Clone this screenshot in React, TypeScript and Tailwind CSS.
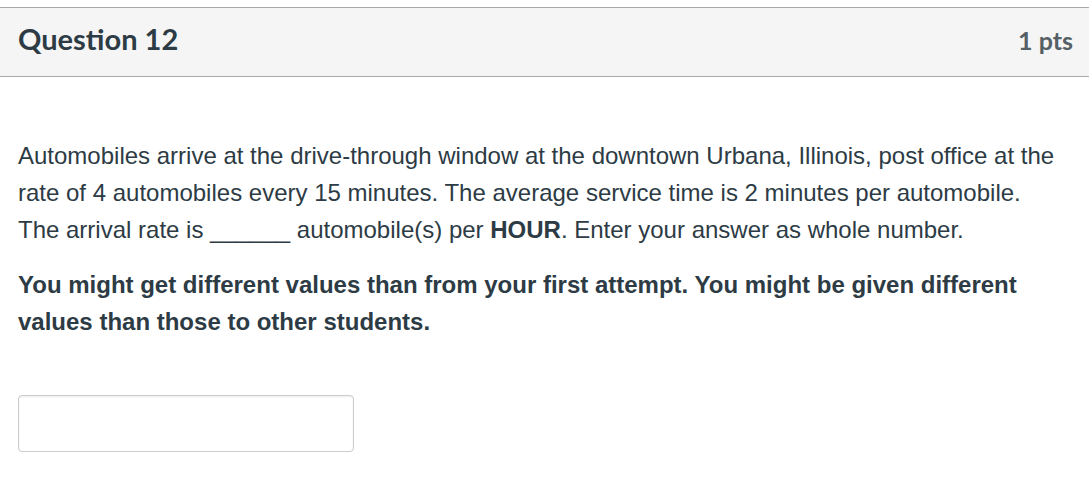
export default function App() {
  return (
    <div className="min-h-screen bg-white pt-[7px] text-[#2d3b45]">
      <div className="flex items-center justify-between border-y border-[#aaaaaa] bg-[#f5f5f5] h-[70px] pl-[18px] pr-[16px] pb-[6px]">
        <span className="font-['Lato',sans-serif] font-bold text-[29px] text-[#2d3b45]">Question 12</span>
        <span className="mt-[4px] font-['Lato',sans-serif] font-bold text-[25px] text-[#555f66]">1 pts</span>
      </div>
      <div className="px-[18px] pt-[60px] font-['Liberation_Sans',Arial,sans-serif] text-[24px] leading-[37px]">
        <p>
          Automobiles arrive at the drive-through window at the downtown Urbana, Illinois, post office at the
          <br />
          rate of 4 automobiles every 15 minutes. The average service time is 2 minutes per automobile.
          <br />
          The arrival rate is ______ automobile(s) per <strong>HOUR</strong>. Enter your answer as whole number.
        </p>
        <p className="mt-[18px] font-bold">
          You might get different values than from your first attempt. You might be given different
          values than those to other students.
        </p>
        <input
          type="text"
          className="mt-[55px] block w-[336px] h-[57px] rounded-[4px] border border-[#c7cdd1] bg-white shadow-[inset_0_1px_2px_rgba(0,0,0,0.08)]"
        />
      </div>
    </div>
  );
}
